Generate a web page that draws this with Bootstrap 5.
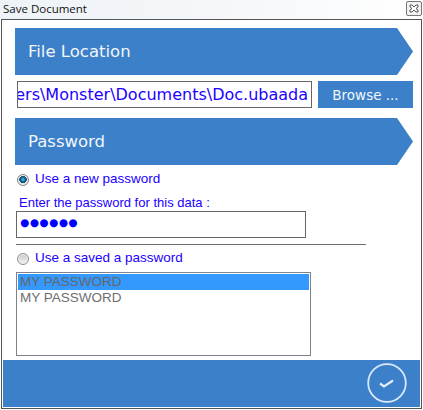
<!DOCTYPE html>
<html lang="en">
<head>
  <meta charset="UTF-8" />
  <meta name="viewport" content="width=device-width, initial-scale=1.0"/>
  <title>Save Document</title>
  <link href="https://cdn.jsdelivr.net/npm/bootstrap@5.3.3/dist/css/bootstrap.min.css" rel="stylesheet">
  <style>
    html, body { height: 410px; overflow: hidden; }
    body { background: #fff; font-family: "Liberation Sans", Arial, sans-serif; font-size: 13px; color: #2200ff; }
    .title-strip { height: 19px; padding: 0 1px 2px 3px; background: linear-gradient(90deg, #eef3f7, #f6f8fa 60%, #fff); color: #111; font-family: "Open Sans", sans-serif; font-size: 11.5px; }
    .close-box { width: 16px; height: 15px; border: 1px solid #777; border-radius: 2px; background: #f2f2f2; }
    .dlg-frame { height: 390px; margin: 0 1px; border: 1px solid #555; padding: 0 1px 1px; background: #fff; }
    .dlg-body { height: 340px; padding: 8px 7px 0 12px; }
    .banner { height: 47px; background: #3b80c8; color: #f2f6fb; font-family: "DejaVu Sans", sans-serif; font-size: 16.500px; padding: 2px 0 0 13px; clip-path: polygon(0 0, 382px 0, 100% 50%, 382px 100%, 0 100%); }
    .path-row { margin: 6px 0 10px; height: 27px; }
    .path-box { width: 295px; height: 27px; margin-left: 2px; border: 1px solid #666; background: #fff; overflow: hidden; font-family: "DejaVu Sans", sans-serif; font-size: 16px; white-space: nowrap; padding-right: 3px; color: #2200ff; }
    .browse-btn { width: 95px; height: 27px; margin-left: 6px; padding: 1px 0 0; border: 0; border-radius: 0; background: #3b80c8; color: #f2f6fb; font-family: "DejaVu Sans", sans-serif; font-size: 13.500px; }
    .radio-line { height: 13px; margin: 8px 0 0 2px; font-size: 13.500px; }
    .radio-dot.form-check-input { width: 12px; height: 12px; margin: 0 6px 0 0; flex: none; border-radius: 50%; border: 1px solid #8f8f8f; background-color: #e4e4e4; background-image: linear-gradient(#c9c9c9, #f4f4f4); box-shadow: inset 0 0 0 1px #f2f2f2; }
    .radio-dot.form-check-input:checked { background-color: #0b5f8e; background-image: radial-gradient(circle at 50% 45%, #5cc0e6 0, #0d6a9c 32%, #06344f 48%, #e8e8e8 52%, #d0d0d0 100%); }
    .pw-label { margin: 10px 0 1px 4px; height: 14px; line-height: 14px; font-size: 13px; }
    .pw-box { width: 290px; height: 27px; margin-left: 1px; border: 1px solid #666; padding: 0 4px 4px 3px; font-family: "DejaVu Sans", sans-serif; font-size: 10.500px; letter-spacing: 0.500px; color: #0000ff; }
    .split-line { width: 350px; margin: 6px 0 0 1px; border: 0; border-top: 1px solid #6d6d6d; opacity: 1; }
    .radio-line.is-low { margin-top: 7px; }
    .saved-list { width: 295px; height: 84px; margin: 7px 0 0 1px; padding: 1px; border: 1px solid #7d828c; border-radius: 0; background: #fff; }
    .saved-item { height: 16px; line-height: 16px; padding: 0 2px; border: 0; background: transparent; color: #6e6e6e; font-size: 13.500px; }
    .saved-item.is-picked { background: #3399ff; color: #666; }
    .foot-bar { height: 47px; background: #3b80c8; padding: 0 13px 1px 0; }
    .ok-btn { width: 40px; height: 40px; padding: 0; border: 0; background: none; }
  </style>
</head>
<body>
  <div class="title-strip d-flex align-items-center justify-content-between">
    <span>Save Document</span>
    <span class="close-box d-flex align-items-center justify-content-center">
      <svg width="10" height="9" viewBox="0 0 10 9"><path d="M1 1h2l2 2 2-2h2v2L7 4.500 9 6v2H7L5 6 3 8H1V6l2-1.500L1 3z" fill="#fff" stroke="#555" stroke-width="1"/></svg>
    </span>
  </div>
  <div class="dlg-frame">
    <div class="dlg-body">
      <div class="banner d-flex align-items-center">File Location</div>
      <div class="path-row d-flex">
        <div class="path-box d-flex align-items-center justify-content-end">C:\Users\Monster\Documents\Doc.ubaada</div>
        <button type="button" class="btn browse-btn">Browse ...</button>
      </div>
      <div class="banner d-flex align-items-center">Password</div>
      <label class="radio-line d-flex align-items-center">
        <input class="radio-dot form-check-input" type="radio" name="pwmode" checked>
        <span>Use a new password</span>
      </label>
      <div class="pw-label">Enter the password for this data :</div>
      <div class="pw-box d-flex align-items-center">●●●●●●</div>
      <hr class="split-line">
      <label class="radio-line is-low d-flex align-items-center">
        <input class="radio-dot form-check-input" type="radio" name="pwmode">
        <span>Use a saved a password</span>
      </label>
      <ul class="saved-list list-group">
        <li class="saved-item is-picked list-group-item">MY PASSWORD</li>
        <li class="saved-item list-group-item">MY PASSWORD</li>
      </ul>
    </div>
    <div class="foot-bar d-flex align-items-center justify-content-end">
      <button type="button" class="btn ok-btn" aria-label="OK">
        <svg width="40" height="40" viewBox="0 0 40 40"><circle cx="20" cy="20" r="18.800" fill="none" stroke="#dbe8fc" stroke-width="1.800"/><path d="M13 20.500l4 3 9-6" fill="none" stroke="#e4eefc" stroke-width="2.200"/></svg>
      </button>
    </div>
  </div>
  <script src="https://cdn.jsdelivr.net/npm/bootstrap@5.3.3/dist/js/bootstrap.bundle.min.js"></script>
</body>
</html>
